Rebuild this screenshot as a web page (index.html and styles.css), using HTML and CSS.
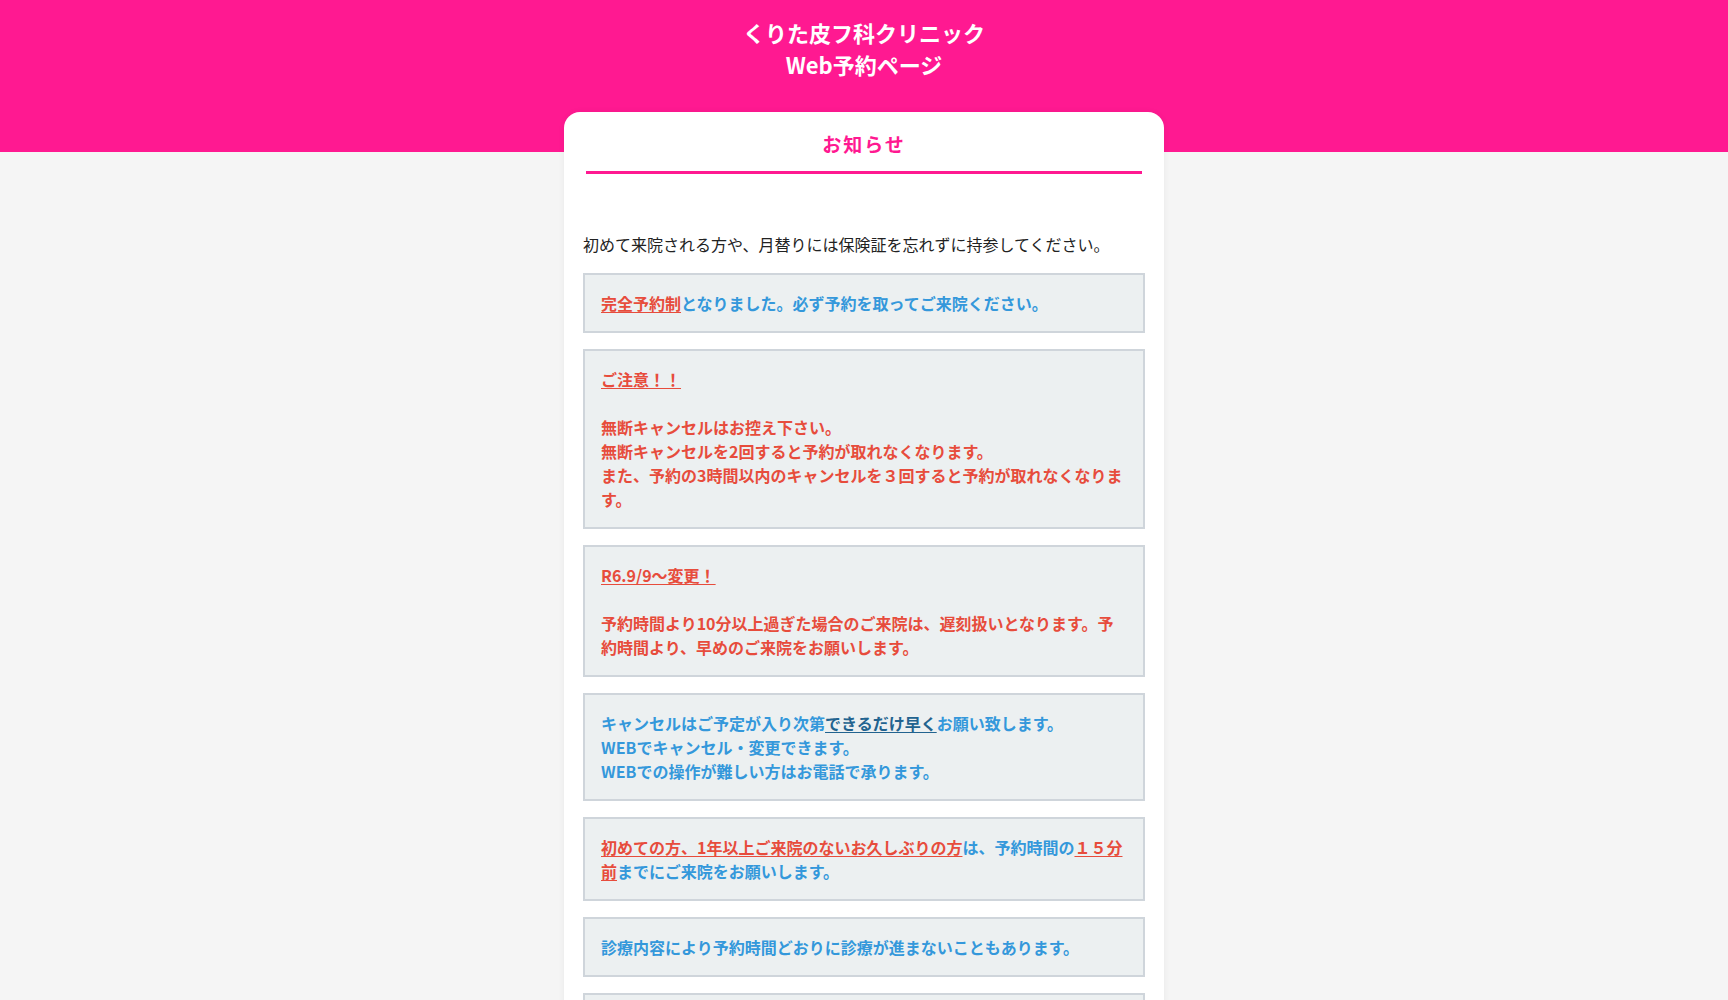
FILE: index.html
```html
<!DOCTYPE html>
<html lang="ja">
<head>
<meta charset="utf-8">
<title>くりた皮フ科クリニック Web予約ページ</title>
<link rel="stylesheet" href="styles.css">
</head>
<body>
<header class="site-header">
  <h1 class="site-title">くりた皮フ科クリニック<br>Web予約ページ</h1>
</header>
<main class="card">
  <h2 class="card-title">お知らせ</h2>
  <div class="card-body">
    <p class="lead">初めて来院される方や、月替りには保険証を忘れずに持参してください。</p>

    <div class="notice blue"><span class="red u">完全予約制</span>となりました。必ず予約を取ってご来院ください。</div>

    <div class="notice red"><span class="u">ご注意！！</span><br><br>無断キャンセルはお控え下さい。<br>無断キャンセルを2回すると予約が取れなくなります。<br>また、予約の3時間以内のキャンセルを３回すると予約が取れなくなります。</div>

    <div class="notice red"><span class="u">R6.9/9～変更！</span><br><br>予約時間より10分以上過ぎた場合のご来院は、遅刻扱いとなります。予約時間より、早めのご来院をお願いします。</div>

    <div class="notice blue">キャンセルはご予定が入り次第<span class="dark u">できるだけ早く</span>お願い致します。<br>WEBでキャンセル・変更できます。<br>WEBでの操作が難しい方はお電話で承ります。</div>

    <div class="notice blue"><span class="red u">初めての方、1年以上ご来院のないお久しぶりの方</span>は、予約時間の<span class="red u">１５分前</span>までにご来院をお願いします。</div>

    <div class="notice blue">診療内容により予約時間どおりに診療が進まないこともあります。</div>

    <div class="notice blue">お電話でのお問い合わせは診療時間内にお願いいたします。</div>
  </div>
</main>
</body>
</html>
```

FILE: styles.css
```css
html, body {
  margin: 0;
  padding: 0;
}
body {
  background: #f5f5f5;
  font-family: "Noto Sans CJK JP", "Noto Sans", sans-serif;
  color: #222;
}
.site-header {
  background: #ff1991;
  padding: 16px 0 72px;
  text-align: center;
}
.site-title {
  margin: 0;
  color: #fff;
  font-size: 22px;
  line-height: 32px;
  font-weight: 700;
}
.card {
  width: 600px;
  margin: -40px auto 0;
  background: #fff;
  border-radius: 16px 16px 0 0;
  box-shadow: 0 0 6px rgba(0, 0, 0, 0.06);
  padding-bottom: 40px;
}
.card-title {
  margin: 0 22px;
  padding: 20px 0 15px;
  border-bottom: 3px solid #ff1991;
  color: #ff1991;
  text-align: center;
  font-size: 19px;
  line-height: 24px;
  font-weight: 700;
  letter-spacing: 2px;
}
.card-body {
  padding: 58px 19px 0;
}
.lead {
  margin: 0 0 17px;
  font-size: 16px;
  line-height: 24px;
  font-weight: 400;
}
.notice {
  background: #ecf0f1;
  border: 2px solid #cfd5db;
  padding: 16px;
  margin-bottom: 16px;
  font-size: 16px;
  line-height: 24px;
  font-weight: 700;
}
.blue {
  color: #3498db;
}
.red {
  color: #e74c3c;
}
.dark {
  color: #22638f;
}
.u {
  text-decoration: underline;
  text-underline-offset: 2px;
}
```
